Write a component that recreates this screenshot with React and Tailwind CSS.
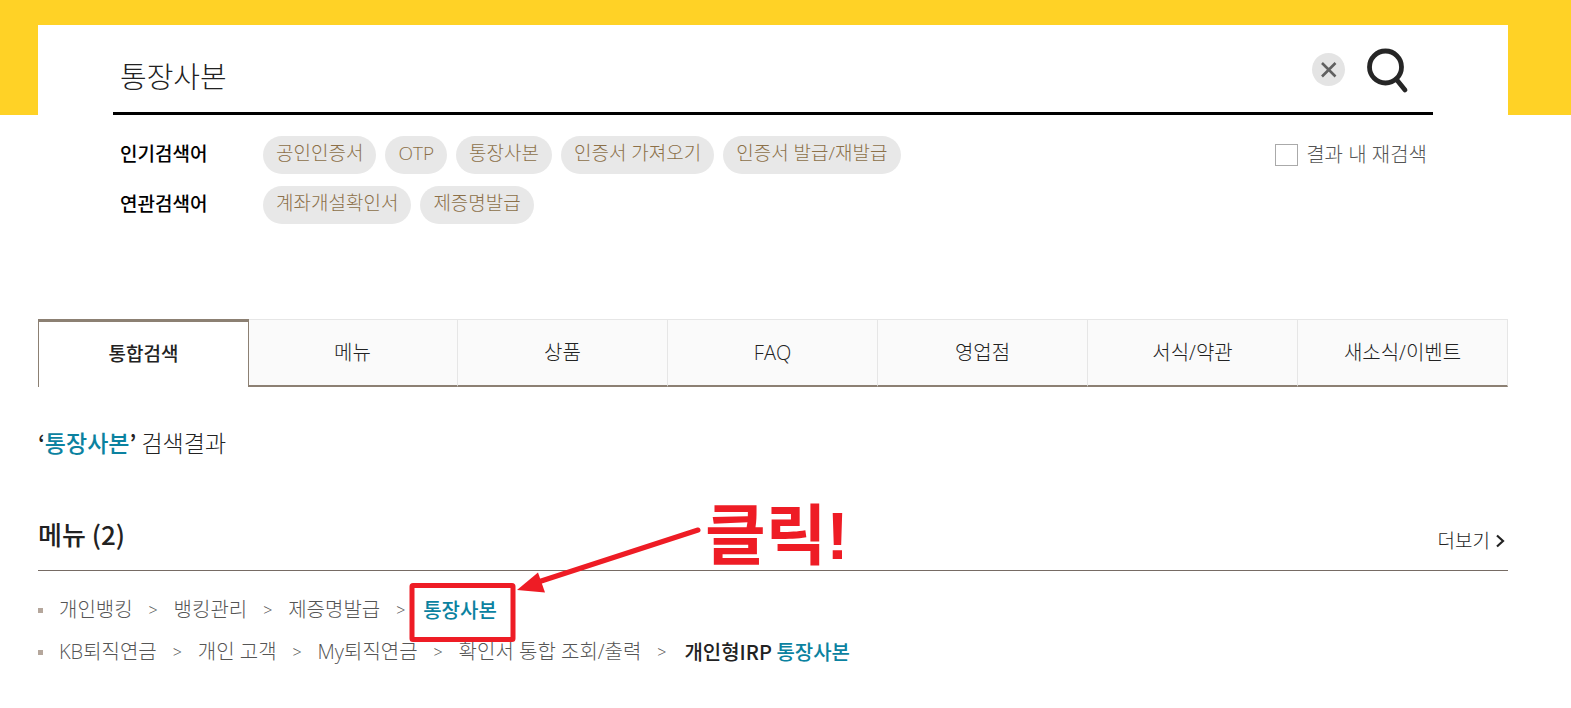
import { useState } from "react";

const POPULAR = ["공인인증서", "OTP", "통장사본", "인증서 가져오기", "인증서 발급/재발급"];
const RELATED = ["계좌개설확인서", "제증명발급"];
const TABS = ["통합검색", "메뉴", "상품", "FAQ", "영업점", "서식/약관", "새소식/이벤트"];

const RESULTS = [
    { path: ["개인뱅킹", "뱅킹관리", "제증명발급"], prefix: "", match: "통장사본" },
    { path: ["KB퇴직연금", "개인 고객", "My퇴직연금", "확인서 통합 조회/출력"], prefix: "개인형IRP ", match: "통장사본" },
];

function KeywordRow({ title, words }) {
    return (
        <div className="flex items-start">
            <p className="w-[143px] shrink-0 text-[19px] leading-9 font-medium text-black">{title}</p>
            <ul className="flex flex-wrap gap-[9px]">
                {words.map((word) => (
                    <li key={word}>
                        <a href="#" className="block rounded-full bg-[#e8e8e8] px-[13px] pb-1 text-[19px] leading-[34px] font-light text-[#8c7048]">{word}</a>
                    </li>
                ))}
            </ul>
        </div>
    );
}

function ResultRow({ item }) {
    return (
        <li className="flex items-center text-xl leading-[42px]">
            <span className="mr-4 size-[5px] bg-[#b5a79c]" />
            {item.path.map((step) => (
                <span key={step} className="flex font-light text-[#555]">
                    {step}
                    <span className="w-[41px] text-center text-base leading-[42px]">&gt;</span>
                </span>
            ))}
            <a href="#" className="ml-0.5 font-['Noto_Sans_CJK_KR',sans-serif] font-medium whitespace-pre text-[#222]">
                {item.prefix}
                <span className="text-[#0b82a0]">{item.match}</span>
            </a>
        </li>
    );
}

export default function App() {
    const [query, setQuery] = useState("통장사본");
    const [active, setActive] = useState("통합검색");

    return (
        <div className="bg-white font-['Open_Sans','Noto_Sans_CJK_KR',sans-serif] text-[#222]">
            <header className="bg-linear-to-b from-[#ffd226] from-[115px] to-white to-[115px] pr-[63px] pl-[38px] pt-[25px]">
                <div className="bg-white px-[75px]">
                    <form className="flex h-[90px] items-center border-b-[3px] border-black pr-6 pl-[7px]" onSubmit={(e) => e.preventDefault()}>
                        <input
                            type="text"
                            aria-label="검색어"
                            value={query}
                            onChange={(e) => setQuery(e.target.value)}
                            className="mt-4 min-w-0 flex-1 text-[29px] leading-10 font-light text-[#222] outline-none"
                        />
                        <button type="button" aria-label="지우기" onClick={() => setQuery("")} className="mt-0.5 mr-[22px] size-[33px] rounded-full bg-[#e4e4e4]">
                            <svg viewBox="0 0 33 33" className="size-[33px]" fill="none" stroke="#606060" strokeWidth="2.6">
                                <path d="M10 10l13.5 13.5M23.5 10L10 23.5" />
                            </svg>
                        </button>
                        <button type="submit" aria-label="검색" className="mt-1">
                            <svg viewBox="0 0 42 46" className="h-[46px] w-[42px]" fill="none" stroke="#262626" strokeWidth="4.8">
                                <circle cx="18.5" cy="19" r="16" />
                                <path d="M29.5 31.5l8.5 10.5" strokeLinecap="round" />
                            </svg>
                        </button>
                    </form>
                    <div className="flex items-start justify-between pt-[21px] pr-1.5 pl-[7px]">
                        <div className="flex flex-col gap-3">
                            <KeywordRow title="인기검색어" words={POPULAR} />
                            <KeywordRow title="연관검색어" words={RELATED} />
                        </div>
                        <label className="flex items-center gap-2 text-xl leading-[38px] font-light text-[#555]">
                            <input type="checkbox" className="h-[22px] w-[23px] appearance-none border border-[#aaa] bg-white checked:bg-[#8c8073]" />
                            결과 내 재검색
                        </label>
                    </div>
                </div>
            </header>

            <main className="pr-[63px] pl-[38px]">
                <nav className="mt-[95px] grid h-[68px] grid-cols-7">
                    {TABS.map((tab) => (
                        <button
                            key={tab}
                            type="button"
                            onClick={() => setActive(tab)}
                            className={
                                tab === active
                                    ? "z-10 -mr-px border-x border-t-[3px] border-[#8c8073] bg-white text-[19px] font-medium"
                                    : "border-t border-r border-b-2 border-[#e6e6e6] border-b-[#8c8073] bg-[#fafafa] text-xl font-light"
                            }
                        >
                            {tab}
                        </button>
                    ))}
                </nav>

                <p className="mt-[35px] font-['Noto_Sans_CJK_KR',sans-serif] text-[23px] leading-10 font-light">
                    <strong className="font-medium">‘<span className="text-[#0b82a0]">통장사본</span>’</strong> 검색결과
                </p>

                <section className="relative mt-[52px]">
                    <div className="flex items-end justify-between border-b border-[#766b64] pb-3">
                        <h2 className="pb-1 font-['Noto_Sans_CJK_KR',sans-serif] text-[26px] leading-10 font-medium">메뉴 (2)</h2>
                        <a href="#" className="flex items-center gap-1.5 pr-[3px] text-[19px] leading-[34px] font-light">
                            더보기
                            <svg viewBox="0 0 9 14" className="h-3.5 w-[9px]" fill="none" stroke="#222" strokeWidth="2.2">
                                <path d="M1 1.5L7 7l-6 5.5" />
                            </svg>
                        </a>
                    </div>
                    <ul className="pt-[18px]">
                        {RESULTS.map((item) => (
                            <ResultRow key={item.path[0]} item={item} />
                        ))}
                    </ul>

                    {/* click guide drawn over the results */}
                    <svg viewBox="0 0 330 140" className="pointer-events-none absolute top-0 left-[370px] h-[140px] w-[330px]" fill="none" stroke="#ee1c25" strokeWidth="5">
                        <rect x="4" y="71.5" width="101" height="54" rx="1" />
                        <path d="M290 16L124 70" strokeLinecap="round" />
                        <path d="M109 76l21-17.5 7 20z" fill="#ee1c25" stroke="none" />
                    </svg>
                    <p className="pointer-events-none absolute -top-[18px] left-[667px] font-['Liberation_Sans','Noto_Sans_CJK_KR',sans-serif] text-[66px] leading-[80px] font-bold text-[#ee1c25]">클릭!</p>
                </section>
            </main>
        </div>
    );
}
